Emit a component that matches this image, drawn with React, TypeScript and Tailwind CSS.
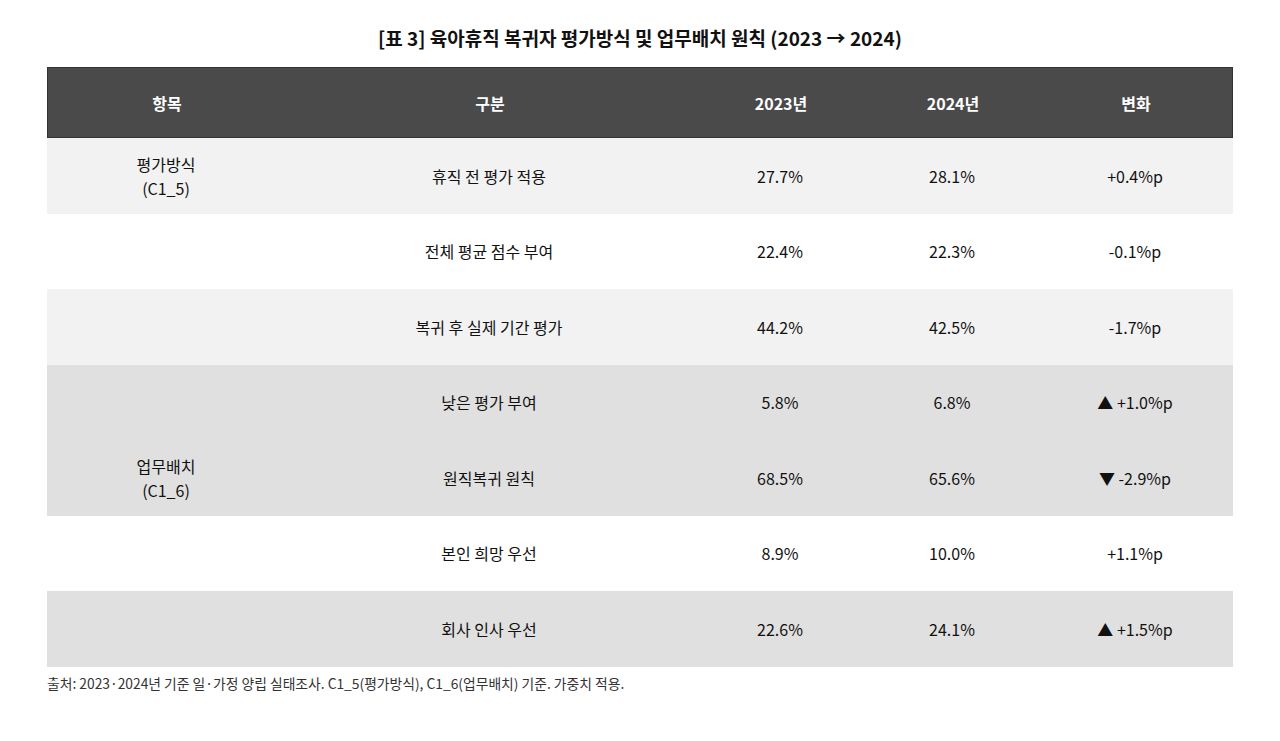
import React from 'react';

interface Row {
  group?: string[];
  label: string;
  y2023: string;
  y2024: string;
  change: string;
  bg: string;
}

const rows: Row[] = [
  { group: ['평가방식', '(C1_5)'], label: '휴직 전 평가 적용', y2023: '27.7%', y2024: '28.1%', change: '+0.4%p', bg: 'bg-[#f2f2f2]' },
  { label: '전체 평균 점수 부여', y2023: '22.4%', y2024: '22.3%', change: '-0.1%p', bg: 'bg-white' },
  { label: '복귀 후 실제 기간 평가', y2023: '44.2%', y2024: '42.5%', change: '-1.7%p', bg: 'bg-[#f2f2f2]' },
  { label: '낮은 평가 부여', y2023: '5.8%', y2024: '6.8%', change: '▲ +1.0%p', bg: 'bg-[#e0e0e0]' },
  { group: ['업무배치', '(C1_6)'], label: '원직복귀 원칙', y2023: '68.5%', y2024: '65.6%', change: '▼ -2.9%p', bg: 'bg-[#e0e0e0]' },
  { label: '본인 희망 우선', y2023: '8.9%', y2024: '10.0%', change: '+1.1%p', bg: 'bg-white' },
  { label: '회사 인사 우선', y2023: '22.6%', y2024: '24.1%', change: '▲ +1.5%p', bg: 'bg-[#e0e0e0]' },
];

const cols = 'grid grid-cols-[238px_408px_174px_170px_196px]';

const App: React.FC = () => {
  return (
    <div
      className="min-h-screen bg-white px-[47px] pt-[26px] text-[#111]"
      style={{ fontFamily: '"Noto Sans CJK KR", "Noto Sans", sans-serif' }}
    >
      <h1 className="text-center text-[19px] font-bold leading-[24px] text-[#111]">
        [표 3] 육아휴직 복귀자 평가방식 및 업무배치 원칙 (2023 → 2024)
      </h1>

      <div className="mt-[17px]">
        {/* header */}
        <div className={`${cols} h-[71px] items-center border border-[#333] bg-[#4a4a4a] text-[16px] font-bold text-white`}>
          <div className="text-center">항목</div>
          <div className="text-center">구분</div>
          <div className="text-center">2023년</div>
          <div className="text-center">2024년</div>
          <div className="text-center">변화</div>
        </div>

        {rows.map((r, i) => (
          <div key={i} className={`${cols} h-[75.5px] items-center text-[16px] leading-[24px] ${r.bg}`}>
            <div className="text-center">
              {r.group && r.group.map((g) => <div key={g}>{g}</div>)}
            </div>
            <div className="text-center">{r.label}</div>
            <div className="text-center">{r.y2023}</div>
            <div className="text-center">{r.y2024}</div>
            <div className="text-center">{r.change}</div>
          </div>
        ))}
      </div>

      <p className="mt-[6px] text-[13.8px] leading-[20px] text-[#333]">
        출처: 2023·2024년 기준 일·가정 양립 실태조사. C1_5(평가방식), C1_6(업무배치) 기준. 가중치 적용.
      </p>
    </div>
  );
};

export default App;
